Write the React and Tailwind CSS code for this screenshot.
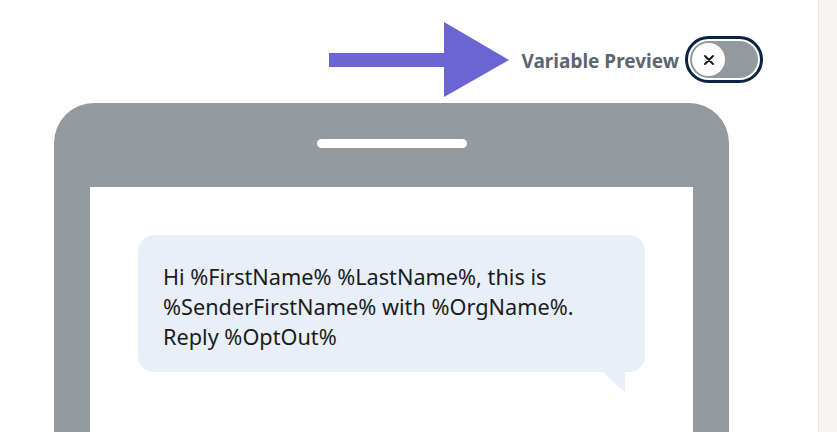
import React from 'react';

const Arrow = () => (
    <svg width="181" height="75" viewBox="0 0 181 75" className="shrink-0">
        <rect x="0" y="31" width="118" height="14" fill="#6b65d4" />
        <polygon points="115,0 180,38 115,75" fill="#6b65d4" />
    </svg>
);

const Toggle = () => (
    <div className="w-[78px] h-[47px] rounded-full border-[3px] border-[#0b2145] bg-white p-[2px] shrink-0">
        <div className="h-full w-full rounded-full bg-[#939a9f] flex items-center px-[2px]">
            <div className="w-[33px] h-[33px] rounded-full bg-white flex items-center justify-center">
                <svg width="10" height="10" viewBox="0 0 10 10">
                    <path d="M1 1 L9 9 M9 1 L1 9" stroke="#111" strokeWidth="1.8" strokeLinecap="round" />
                </svg>
            </div>
        </div>
    </div>
);

export default function App() {
    return (
        <div className="w-[837px] h-[432px] overflow-hidden flex bg-white" style={{ fontFamily: '"Noto Sans", "Open Sans", sans-serif' }}>
            {/* Main */}
            <main className="w-[818px] shrink-0 flex flex-col">
                <div className="mt-[22px] h-[75px] flex items-center justify-end pr-[55px]">
                    <Arrow />
                    <span className="ml-[12px] mr-[6px] mt-[3px] text-[19px] font-bold text-[#5d6570]">Variable Preview</span>
                    <Toggle />
                </div>

                {/* Phone */}
                <div className="mt-[6px] ml-[54px] w-[675px] flex-1 rounded-t-[40px] bg-[#939a9f] px-[36px] pt-[36px] flex flex-col">
                    <div className="mx-auto w-[150px] h-[9px] rounded-full bg-white" />
                    <div className="mt-[39px] flex-1 bg-white p-[48px]">
                        <div className="relative rounded-[16px] bg-[#e9eff8] pl-[25px] pr-[20px] pt-[27px] pb-[20px] text-[21.7px] leading-[30px] text-[#1b1b1b]">
                            <p>
                                Hi %FirstName% %LastName%, this is
                                <br />
                                %SenderFirstName% with %OrgName%.
                                <br />
                                Reply %OptOut%
                            </p>
                            <svg width="22" height="21" viewBox="0 0 22 21" className="absolute right-[20px] top-full">
                                <polygon points="0,0 22,0 22,21" fill="#e9eff8" />
                            </svg>
                        </div>
                    </div>
                </div>
            </main>

            {/* Side panel */}
            <aside className="flex-1 border-l border-[#e6e4df] bg-[#f6f5f2]" />
        </div>
    );
}
